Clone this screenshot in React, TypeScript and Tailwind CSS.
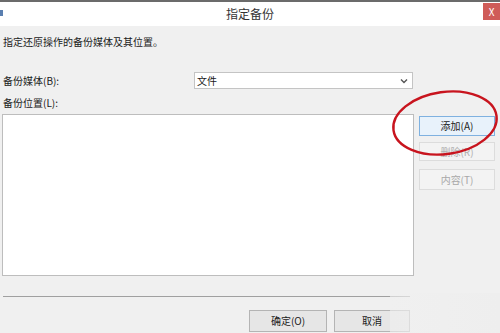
import React from "react";

const cjk = { fontFamily: '"Noto Sans CJK SC", "Noto Sans", sans-serif' };

export default function App() {
  return (
    <div className="relative h-[333px] w-[500px] overflow-hidden bg-[#f0f0f0] text-[#1a1a1a]" style={cjk}>
      {/* Title bar */}
      <div className="relative flex h-[26px] items-center justify-center border-t-2 border-[#6b6b6b] bg-white">
        <div className="absolute left-0 top-[8px] h-[6px] w-[3px] bg-[#5a7fb0]" />
        <span className="text-[12px] leading-none text-[#333]">指定备份</span>
        <div className="absolute right-0 top-[1px] flex h-[17px] w-[17px] items-center justify-center bg-[#cf5c59] text-[10px] leading-none text-white">
          X
        </div>
      </div>

      {/* Body */}
      <div className="flex flex-col px-[3px]">
        <div className="mt-[9px] text-[10px] leading-[14px]">指定还原操作的备份媒体及其位置。</div>

        <div className="mt-[23px] flex h-[17px] items-center">
          <span className="w-[191px] text-[10px] leading-none">备份媒体(B):</span>
          <div className="flex h-[17px] w-[219px] items-center justify-between border border-[#c4c4c4] bg-white pl-[2px] pr-[4px]">
            <span className="text-[10px] leading-none">文件</span>
            <svg width="8" height="6" viewBox="0 0 8 6">
              <path d="M1 1.5 L4 4.5 L7 1.5" fill="none" stroke="#555" strokeWidth="1.4" />
            </svg>
          </div>
        </div>

        <div className="mt-[7px] text-[10px] leading-[14px]">备份位置(L):</div>

        <div className="mt-[4px] flex gap-[5px]">
          <div className="h-[162px] w-[412px] -ml-[1px] border border-[#bdbdbd] bg-white" />
          <div className="flex w-[76px] flex-col pt-[2px]">
            <button className="flex h-[20px] items-center justify-center border border-[#7fb1e0] bg-[#e8f2fb] text-[10px] leading-none text-[#222]">
              添加(A)
            </button>
            <button className="mt-[6px] flex h-[19px] items-center justify-center border border-[#dcdcdc] bg-[#f3f3f3] text-[10px] leading-none text-[#b0b0b0]">
              删除(R)
            </button>
            <button className="mt-[8px] flex h-[21px] items-center justify-center border border-[#dcdcdc] bg-[#f3f3f3] text-[10px] leading-none text-[#a8a8a8]">
              内容(T)
            </button>
          </div>
        </div>

        <div className="mt-[20px] h-[2px] w-[407px] border-t border-[#a0a0a0] border-b-white" />

        <div className="mt-[12px] flex pl-[246px]">
          <button className="flex h-[22px] w-[78px] items-center justify-center border border-[#b4b4b4] bg-[#e6e6e6] text-[10px] leading-none">
            确定(O)
          </button>
          <button className="ml-[7px] flex h-[22px] w-[76px] items-center justify-center border border-[#b4b4b4] bg-[#e6e6e6] text-[10px] leading-none">
            取消
          </button>
        </div>
      </div>

      {/* Watermark blur */}
      <div className="absolute bottom-0 right-0 h-[40px] w-[110px] bg-gradient-to-r from-[#f0f0f0]/60 to-[#eeeeee]" />

      {/* Red annotation ellipse */}
      <svg className="pointer-events-none absolute left-0 top-0" width="500" height="333">
        <ellipse cx="445" cy="123" rx="52" ry="31" fill="none" stroke="#c8141e" strokeWidth="2.4" transform="rotate(-8 445 123)" />
      </svg>
    </div>
  );
}
